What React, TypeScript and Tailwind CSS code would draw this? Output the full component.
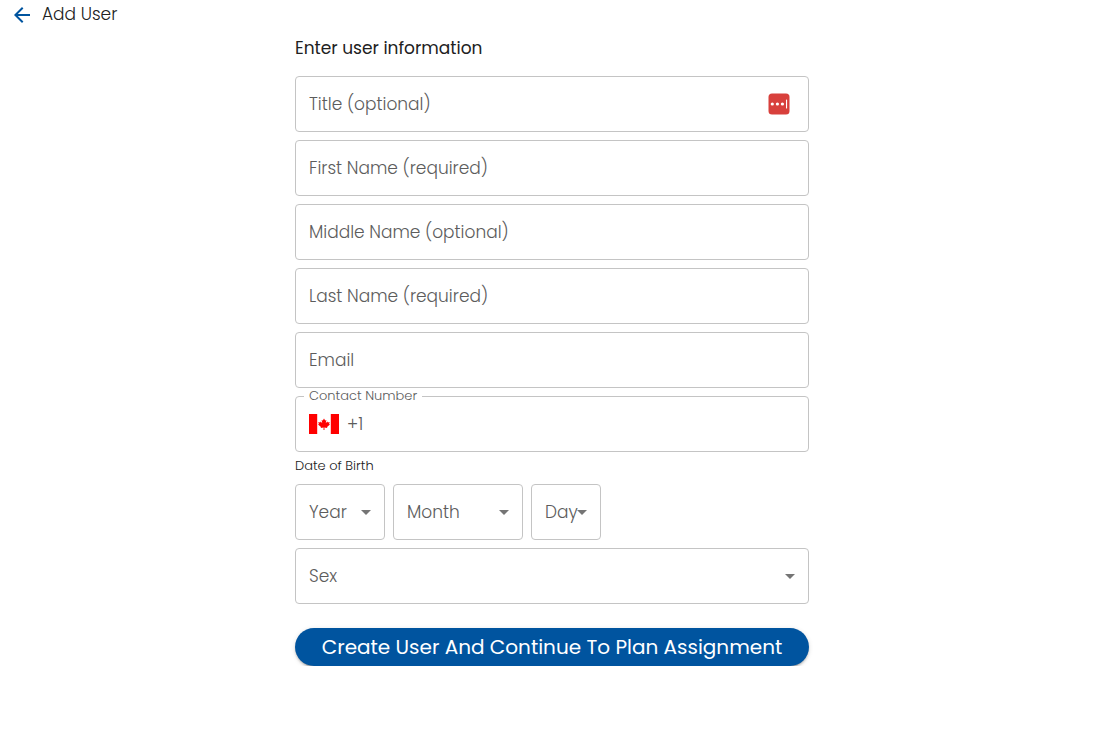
import { useState } from "react";
import type { ReactNode } from "react";

const boxClass =
  "grid h-14 items-center rounded border border-[#c4c4c4] bg-white focus-within:border-[#00549f]";
const labelClass =
  "pointer-events-none col-start-1 row-start-1 px-[13px] text-[17px] leading-6 font-light text-[#5c5c5c]";

function TextField({
  id,
  label,
  type = "text",
  children,
}: {
  id: string;
  label: string;
  type?: string;
  children?: ReactNode;
}) {
  const [value, setValue] = useState("");
  return (
    <div className={boxClass}>
      <input
        id={id}
        type={type}
        value={value}
        onChange={(e) => setValue(e.target.value)}
        className="col-start-1 row-start-1 h-full w-full min-w-0 bg-transparent px-[13px] text-[17px] font-light outline-none"
      />
      {value === "" && (
        <label htmlFor={id} className={labelClass}>
          {label}
        </label>
      )}
      {children}
    </div>
  );
}

function SelectField({
  id,
  label,
  options,
}: {
  id: string;
  label: string;
  options: string[];
}) {
  const [value, setValue] = useState("");
  return (
    <div className={boxClass}>
      <select
        id={id}
        value={value}
        onChange={(e) => setValue(e.target.value)}
        className="col-start-1 row-start-1 h-full w-full min-w-0 appearance-none bg-transparent px-[13px] text-[17px] font-light outline-none"
      >
        <option value="" />
        {options.map((o) => (
          <option key={o} value={o}>
            {o}
          </option>
        ))}
      </select>
      {value === "" && (
        <label htmlFor={id} className={labelClass}>
          {label}
        </label>
      )}
      <svg
        viewBox="0 0 24 24"
        className="pointer-events-none col-start-1 row-start-1 mr-1.5 size-6 justify-self-end fill-[#757575]"
        aria-hidden="true"
      >
        <path d="M7 10l5 5 5-5z" />
      </svg>
    </div>
  );
}

function PasswordManagerIcon() {
  return (
    <svg
      viewBox="0 0 22 22"
      className="col-start-1 row-start-1 mr-[18px] size-[22px] justify-self-end"
      aria-hidden="true"
    >
      <rect x="0.5" y="0.5" width="21" height="21" rx="3.5" fill="#d8403c" />
      <circle cx="4.3" cy="11" r="1.6" fill="#fff" />
      <circle cx="9.4" cy="11" r="1.6" fill="#fff" />
      <circle cx="14.4" cy="11" r="1.6" fill="#fff" />
      <rect x="18" y="6.5" width="1.1" height="9" rx="0.5" fill="#fff" />
    </svg>
  );
}

function CanadaFlag() {
  return (
    <svg viewBox="0 0 30 20" className="h-5 w-[30px] shrink-0" role="img" aria-label="Canada">
      <rect width="30" height="20" fill="#fff" />
      <rect width="8.2" height="20" fill="#f00" />
      <rect x="21.8" width="8.2" height="20" fill="#f00" />
      <path
        fill="#f00"
        d="M15 4.4l-1.2 2.2-1.2-.6.6 3.1-1.7-1.6-.4.9-1.8-.3.6 1.8-.9.6 3 2.4-.3 1.1 2.9-.4-.1 2.4h1l-.1-2.4 2.9.4-.3-1.1 3-2.4-.9-.6.6-1.8-1.8.3-.4-.9-1.7 1.6.6-3.1-1.2.6z"
      />
    </svg>
  );
}

const years = Array.from({ length: 100 }, (_, i) => String(2024 - i));
const months = [
  "January", "February", "March", "April", "May", "June",
  "July", "August", "September", "October", "November", "December",
];
const days = Array.from({ length: 31 }, (_, i) => String(i + 1));

export default function App() {
  const [phone, setPhone] = useState("+1");
  return (
    <div className="bg-white font-['Poppins','Inter',sans-serif] text-[#212121]">
      <header className="flex h-7 items-center gap-2 pl-2.5">
        <button type="button" aria-label="Back" className="mt-0.5">
          <svg viewBox="0 0 24 24" className="size-6 fill-[#00549f]" aria-hidden="true">
            <path d="M20 11H7.83l5.59-5.59L12 4l-8 8 8 8 1.41-1.41L7.83 13H20v-2z" />
          </svg>
        </button>
        <h1 className="text-[17px] leading-6 font-light">Add User</h1>
      </header>

      <main className="pl-2">
        <form
          className="mx-auto flex w-full max-w-[514px] flex-col gap-2"
          onSubmit={(e) => e.preventDefault()}
        >
          <h2 className="mt-2 mb-2 text-[17px] leading-6">Enter user information</h2>
          <TextField id="title" label="Title (optional)">
            <PasswordManagerIcon />
          </TextField>
          <TextField id="first-name" label="First Name (required)" />
          <TextField id="middle-name" label="Middle Name (optional)" />
          <TextField id="last-name" label="Last Name (required)" />
          <TextField id="email" label="Email" type="email" />

          <div className="relative flex h-14 items-center gap-2 rounded border border-[#c4c4c4] px-[13px]">
            <label
              htmlFor="phone"
              className="absolute -top-[9px] left-2 bg-white px-[5px] text-[13px] leading-4 font-light text-[#5c5c5c]"
            >
              Contact Number
            </label>
            <CanadaFlag />
            <input
              id="phone"
              type="tel"
              value={phone}
              onChange={(e) => setPhone(e.target.value)}
              className="h-full min-w-0 flex-1 bg-transparent text-[17px] font-light text-[#5c5c5c] outline-none"
            />
          </div>

          <fieldset className="-mt-1">
            <legend className="mb-2 text-[13px] leading-5 font-light text-[#212121]">
              Date of Birth
            </legend>
            <div className="grid grid-cols-[90px_130px_70px] gap-2">
              <SelectField id="year" label="Year" options={years} />
              <SelectField id="month" label="Month" options={months} />
              <SelectField id="day" label="Day" options={days} />
            </div>
          </fieldset>

          <SelectField id="sex" label="Sex" options={["Female", "Male"]} />

          <button
            type="submit"
            className="mt-4 rounded-full bg-[#00549f] px-4 py-[5px] text-xl leading-7 text-white shadow-[0_3px_1px_-2px_rgba(0,0,0,0.2),0_2px_2px_0_rgba(0,0,0,0.14),0_1px_5px_0_rgba(0,0,0,0.12)]"
          >
            Create User And Continue To Plan Assignment
          </button>
        </form>
      </main>
    </div>
  );
}
